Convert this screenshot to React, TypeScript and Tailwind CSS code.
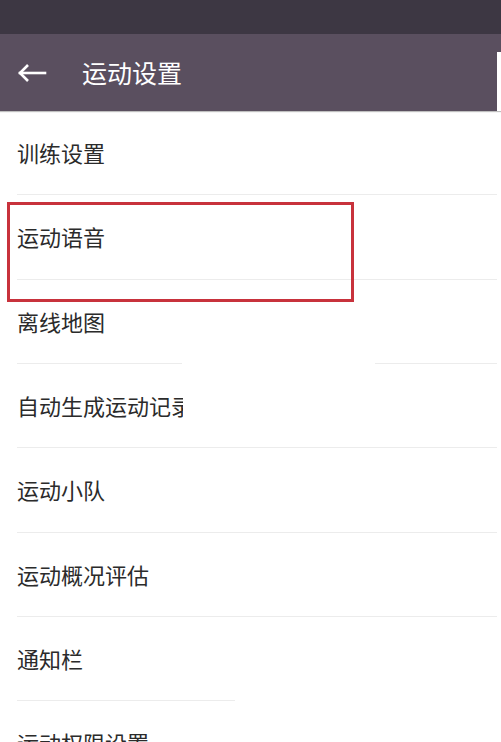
import * as React from "react";

type Row = {
  label: string;
  /** clip label width (px) where the source image cuts it off */
  clip?: number;
  /** divider gap [from, to] in px from the left of the divider */
  gap?: [number, number];
  /** divider length override */
  lineWidth?: number;
};

const rows: Row[] = [
  { label: "训练设置" },
  { label: "运动语音" },
  { label: "离线地图", gap: [165, 358] },
  { label: "自动生成运动记录", clip: 166 },
  { label: "运动小队" },
  { label: "运动概况评估" },
  { label: "通知栏", lineWidth: 218 },
  { label: "运动权限设置" },
];

function Divider({ gap, lineWidth }: { gap?: [number, number]; lineWidth?: number }) {
  if (gap) {
    return (
      <div className="ml-[17px] mr-[4px] flex h-px">
        <div className="h-px bg-[#ececec]" style={{ width: gap[0] }} />
        <div className="h-px" style={{ width: gap[1] - gap[0] }} />
        <div className="h-px flex-1 bg-[#ececec]" />
      </div>
    );
  }
  return (
    <div
      className="ml-[17px] mr-[4px] h-px bg-[#ececec]"
      style={lineWidth ? { width: lineWidth } : undefined}
    />
  );
}

export default function App() {
  return (
    <div
      className="relative h-[742px] w-[501px] overflow-hidden bg-white"
      style={{ fontFamily: '"Noto Sans CJK SC", "Noto Sans", sans-serif' }}
    >
      {/* status bar */}
      <div className="h-[34px] bg-[#3d3743]" />

      {/* toolbar */}
      <div className="flex h-[77px] items-stretch bg-[#5a4f5f] shadow-[0_1px_1px_rgba(0,0,0,0.25)]">
        <div className="flex flex-1 items-center">
          <svg
            width="30"
            height="22"
            viewBox="0 0 30 22"
            className="ml-[17px]"
            fill="none"
            stroke="white"
            strokeWidth="2.6"
            strokeLinecap="square"
          >
            <path d="M28 11H3" />
            <path d="M11 3L3 11L11 19" strokeLinecap="butt" />
          </svg>
          <span className="ml-[35px] text-[25px] leading-normal text-white">运动设置</span>
        </div>
        <div className="mt-[18px] w-[4px] bg-white" />
      </div>

      {/* list */}
      <ul className="flex flex-col">
        {rows.map((r) => (
          <li key={r.label} className="flex h-[84.33px] flex-col">
            <div className="flex flex-1 items-center pl-[17px]">
              <span
                className="block overflow-hidden whitespace-nowrap text-[22px] leading-normal text-[#2b2b2b]"
                style={r.clip ? { width: r.clip } : undefined}
              >
                {r.label}
              </span>
            </div>
            <Divider gap={r.gap} lineWidth={r.lineWidth} />
          </li>
        ))}
      </ul>

      {/* highlight box */}
      <div className="absolute left-[7px] top-[202px] h-[100px] w-[347px] border-[3px] border-[#c8323c]" />
    </div>
  );
}
